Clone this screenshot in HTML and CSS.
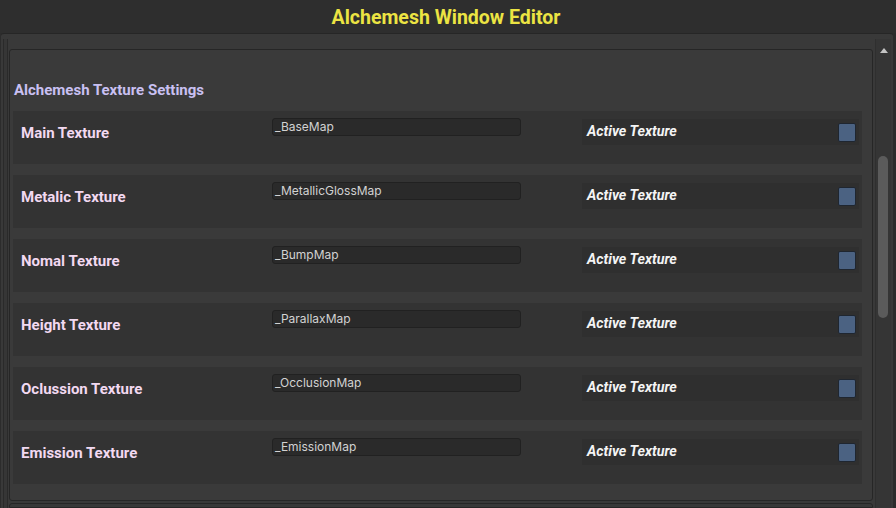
FILE: index.html
```html
<!DOCTYPE html>
<html>
<head>
<meta charset="utf-8">
<link rel="stylesheet" href="styles.css">
</head>
<body>
<div class="titlebar"><h1 class="title">Alchemesh Window Editor</h1></div>
<div class="panel">
  <div class="edge"></div>
  <div class="content">
    <div class="inner">
      <div class="section-title">Alchemesh Texture Settings</div>
      <div class="rows">
        <div class="row"><div class="label">Main Texture</div><div class="field">_BaseMap</div><div class="active"><span>Active Texture</span><span class="check"></span></div></div>
        <div class="row"><div class="label">Metalic Texture</div><div class="field">_MetallicGlossMap</div><div class="active"><span>Active Texture</span><span class="check"></span></div></div>
        <div class="row"><div class="label">Nomal Texture</div><div class="field">_BumpMap</div><div class="active"><span>Active Texture</span><span class="check"></span></div></div>
        <div class="row"><div class="label">Height Texture</div><div class="field">_ParallaxMap</div><div class="active"><span>Active Texture</span><span class="check"></span></div></div>
        <div class="row"><div class="label">Oclussion Texture</div><div class="field">_OcclusionMap</div><div class="active"><span>Active Texture</span><span class="check"></span></div></div>
        <div class="row"><div class="label">Emission Texture</div><div class="field">_EmissionMap</div><div class="active"><span>Active Texture</span><span class="check"></span></div></div>
      </div>
    </div>
    <div class="next"></div>
  </div>
  <div class="scrollbar">
    <div class="arrow"></div>
    <div class="thumb"></div>
  </div>
</div>
</body>
</html>
```
FILE: styles.css
```css
html, body {
  margin: 0;
  padding: 0;
  background: #2c2c2c;
  width: 896px;
  height: 508px;
  overflow: hidden;
  font-family: Roboto, "Noto Sans", sans-serif;
}
.titlebar {
  height: 33px;
  background: #2e2e2e;
  display: flex;
  align-items: center;
  justify-content: center;
}
.title {
  margin: 0;
  font-size: 19.5px;
  font-weight: 700;
  color: #ece443;
  padding-top: 2px;
  padding-right: 4px;
}
.panel {
  margin-left: 1px;
  width: 892px;
  height: 475px;
  background: #393939;
  border-top: 1px solid #262626;
  border-radius: 3px 3px 0 0;
  box-sizing: border-box;
  display: flex;
  padding-top: 5px;
}
.edge {
  width: 3px;
  margin-left: 2px;
  border-left: 1px solid #2a2a2a;
  border-right: 1px solid #2a2a2a;
  background: #363636;
  margin-right: 1px;
}
.content {
  width: 864px;
  display: flex;
  flex-direction: column;
}
.inner {
  margin-top: 10px;
  height: 452px;
  box-sizing: border-box;
  border: 1px solid #262626;
  border-radius: 3px;
  background: #3a3a3a;
  padding: 30px 10px 0 3px;
  overflow: hidden;
}
.section-title {
  font-size: 15px;
  font-weight: 700;
  color: #c9c0f2;
  padding-left: 1px;
  height: 20px;
  line-height: 20px;
}
.rows {
  margin-top: 11px;
  display: flex;
  flex-direction: column;
  gap: 11px;
}
.row {
  height: 53px;
  background: #333333;
  display: flex;
  align-items: flex-start;
  position: relative;
}
.label {
  width: 259px;
  padding-left: 8px;
  padding-top: 13px;
  font-size: 15px;
  font-weight: 700;
  color: #f2d9f1;
  line-height: 18px;
  box-sizing: border-box;
}
.field {
  margin-top: 7px;
  width: 249px;
  height: 18px;
  box-sizing: border-box;
  background: #2a2a2a;
  border: 1px solid #212121;
  border-radius: 3px;
  font-family: Inter, Roboto, sans-serif;
  font-size: 12px;
  line-height: 15px;
  color: #d2d2d2;
  padding-left: 2px;
}
.active {
  margin-left: 61px;
  margin-top: 8px;
  width: 277px;
  height: 26px;
  background: #2f2f2f;
  display: flex;
  align-items: center;
  justify-content: space-between;
  padding: 0 3px 0 5px;
  box-sizing: border-box;
  font-size: 14.3px;
  font-weight: 700;
  font-style: italic;
  color: #f4f4f4;
}
.active span:first-child { margin-top: -3px; }
.check {
  width: 18px;
  height: 19px;
  box-sizing: border-box;
  background: #4b6282;
  border: 1px solid #1f2630;
  border-radius: 2px;
}
.next {
  margin-top: 2px;
  flex: 1;
  border: 1px solid #262626;
  border-radius: 3px 3px 0 0;
  background: #383838;
}
.scrollbar {
  width: 15px;
  margin-left: 2px;
  background: #353535;
  border-left: 1px solid #2f2f2f;
  position: relative;
  margin-top: 0;
}
.arrow {
  position: absolute;
  left: 4px;
  top: 9px;
  width: 0;
  height: 0;
  border-left: 4px solid transparent;
  border-right: 4px solid transparent;
  border-bottom: 5px solid #c4c4c4;
}
.thumb {
  position: absolute;
  left: 2px;
  top: 117px;
  width: 10px;
  height: 162px;
  background: #5b5b5b;
  border-radius: 5px;
}
```
